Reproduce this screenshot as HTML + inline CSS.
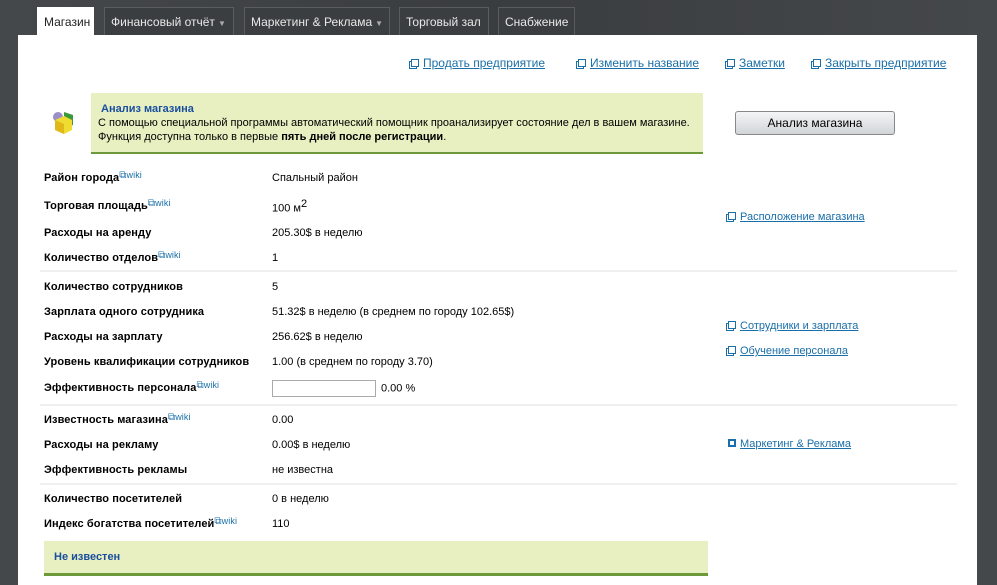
<!DOCTYPE html>
<html><head><meta charset="utf-8"><style>
*{margin:0;padding:0;box-sizing:border-box}
body{width:997px;height:585px;overflow:hidden;background:linear-gradient(90deg,#45484b 0,#3a3d40 50%,#45484b 100%);font-family:"Liberation Sans",sans-serif;font-size:11px;color:#000;position:relative}
.tab{position:absolute;top:7px;height:28px;line-height:28px;background:#3b3e41;border:1px solid #5a5d60;border-bottom:none;color:#e8e8e8;font-size:12px;padding:0 6px;white-space:nowrap}
.tab.a{background:#fff;color:#222;border-color:#fff}
.ar{font-size:8px;color:#aaa;margin-left:3px}
#panel{position:absolute;left:18px;top:35px;width:959px;height:550px;background:#fff}
.a2{position:absolute;color:#1a6fa8;text-decoration:underline;font-size:12px;white-space:nowrap}
.ic{display:inline-block;width:8px;height:8px;border:1px solid #1a6fa8;margin-right:4px;position:relative;top:0px;box-shadow:-2px 2px 0 -1px #fff,-2px 2px 0 0 #1a6fa8}
.l{position:absolute;left:44px;font-weight:bold;white-space:nowrap;letter-spacing:0.1px}
.v{position:absolute;left:272px;white-space:nowrap}
.w{color:#1a6fa8;font-weight:normal;font-size:9px;vertical-align:top;position:relative;top:-2px}
.w:before{content:"⧉";font-size:10px}
.sep{position:absolute;left:40px;width:917px;height:2px;background:#f0f0f0}
</style></head><body>
<div class="tab a" style="left:37px;width:57px">Магазин</div>
<div class="tab" style="left:104px;width:130px">Финансовый отчёт<span class="ar">▼</span></div>
<div class="tab" style="left:244px;width:146px">Маркетинг &amp; Реклама<span class="ar">▼</span></div>
<div class="tab" style="left:399px;width:90px">Торговый зал</div>
<div class="tab" style="left:498px;width:77px">Снабжение</div>
<div id="panel"></div>
<span class="a2" style="left:411px;top:56px"><span class="ic"></span>Продать предприятие</span>
<span class="a2" style="left:578px;top:56px"><span class="ic"></span>Изменить название</span>
<span class="a2" style="left:727px;top:56px"><span class="ic"></span>Заметки</span>
<span class="a2" style="left:813px;top:56px"><span class="ic"></span>Закрыть предприятие</span>
<svg style="position:absolute;left:50px;top:108px" width="28" height="28" viewBox="0 0 28 28"><circle cx="8" cy="9" r="5" fill="#9a8fc8"/><path d="M14 4l9 3v10l-9 3z" fill="#3a9a3a"/><path d="M5 12l9-4 8 4v10l-8 4-9-4z" fill="#f0dc30"/><path d="M5 12l9 4v10l-9-4z" fill="#e0b818"/></svg>
<div style="position:absolute;left:91px;top:93px;width:612px;height:61px;background:#e8efc0;border-bottom:2px solid #6c9a3a;padding:9px 0 0 7px;font-size:11px;line-height:14px">
<div style="color:#1a4fa0;font-weight:bold;margin-left:3px">Анализ магазина</div>
С помощью специальной программы автоматический помощник проанализирует состояние дел в вашем магазине.<br>Функция доступна только в первые <b>пять дней после регистрации</b>.</div>
<div style="position:absolute;left:735px;top:111px;width:160px;height:24px;border:1px solid #888;border-radius:3px;background:linear-gradient(#f4f5f6,#d2d5d8);text-align:center;line-height:22px;font-size:12px">Анализ магазина</div>
<div class="l" style="top:172px">Район города<span class="w">wiki</span></div><div class="v" style="top:172px">Спальный район</div>
<div class="l" style="top:200px">Торговая площадь<span class="w">wiki</span></div><div class="v" style="top:198px">100 м<sup style="font-size:11px">2</sup></div>
<div class="l" style="top:227px">Расходы на аренду</div><div class="v" style="top:227px">205.30$ в неделю</div>
<div class="l" style="top:252px">Количество отделов<span class="w">wiki</span></div><div class="v" style="top:252px">1</div>
<div class="sep" style="top:270px"></div>
<div class="l" style="top:281px">Количество сотрудников</div><div class="v" style="top:281px">5</div>
<div class="l" style="top:306px">Зарплата одного сотрудника</div><div class="v" style="top:306px">51.32$ в неделю (в среднем по городу 102.65$)</div>
<div class="l" style="top:331px">Расходы на зарплату</div><div class="v" style="top:331px">256.62$ в неделю</div>
<div class="l" style="top:356px">Уровень квалификации сотрудников</div><div class="v" style="top:356px">1.00 (в среднем по городу 3.70)</div>
<div class="l" style="top:382px">Эффективность персонала<span class="w">wiki</span></div><div class="v" style="top:380px"><span style="display:inline-block;width:104px;height:17px;border:1px solid #aaa;vertical-align:middle;margin-right:5px"></span>0.00 %</div>
<div class="sep" style="top:404px"></div>
<div class="l" style="top:414px">Известность магазина<span class="w">wiki</span></div><div class="v" style="top:414px">0.00</div>
<div class="l" style="top:439px">Расходы на рекламу</div><div class="v" style="top:439px">0.00$ в неделю</div>
<div class="l" style="top:464px">Эффективность рекламы</div><div class="v" style="top:464px">не известна</div>
<div class="sep" style="top:483px"></div>
<div class="l" style="top:493px">Количество посетителей</div><div class="v" style="top:493px">0 в неделю</div>
<div class="l" style="top:518px">Индекс богатства посетителей<span class="w">wiki</span></div><div class="v" style="top:518px">110</div>
<div style="position:absolute;left:44px;top:541px;width:664px;height:35px;background:#e8efc0;border-bottom:3px solid #6c9a3a;color:#1a4fa0;font-weight:bold;padding:10px 0 0 10px">Не известен</div>
<span class="a2" style="left:728px;top:211px;font-size:11px"><span class="ic"></span>Расположение магазина</span>
<span class="a2" style="left:728px;top:320px;font-size:11px"><span class="ic"></span>Сотрудники и зарплата</span>
<span class="a2" style="left:728px;top:345px;font-size:11px"><span class="ic"></span>Обучение персонала</span>
<span class="a2" style="left:728px;top:438px;font-size:11px"><span class="ic" style="box-shadow:none;border-width:2px"></span>Маркетинг &amp; Реклама</span>
</body></html>
